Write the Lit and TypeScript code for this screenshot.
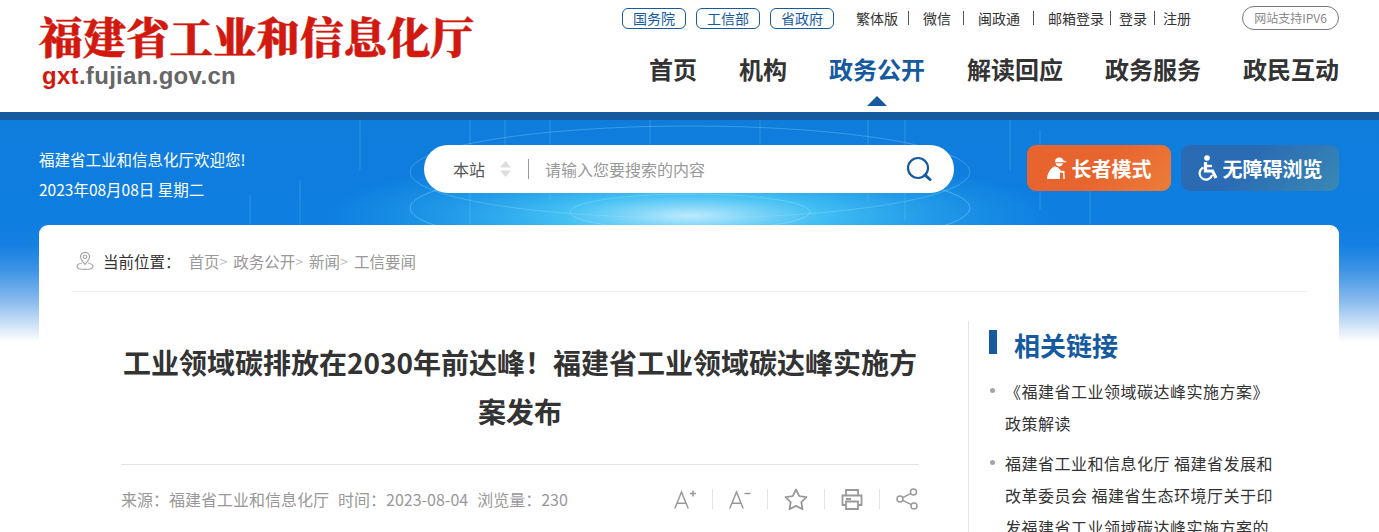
import { LitElement, html, css, svg } from "lit";
import { customElement } from "lit/decorators.js";

const FONT = `"Microsoft YaHei","Noto Sans CJK SC","Liberation Sans",sans-serif`;

const deco = svg`
<svg class="deco" width="1379" height="240" viewBox="0 120 1379 240" aria-hidden="true">
  <defs>
    <radialGradient id="glow" cx="50%" cy="50%" r="50%">
      <stop offset="0" stop-color="#c9f1ff" stop-opacity=".95"/>
      <stop offset=".35" stop-color="#4fd0f8" stop-opacity=".8"/>
      <stop offset="1" stop-color="#2ab0f0" stop-opacity="0"/>
    </radialGradient>
  </defs>
  <ellipse cx="690" cy="216" rx="370" ry="62" fill="url(#glow)"/>
  <g fill="none" stroke="#9fe2ff" stroke-opacity=".4">
    <ellipse cx="690" cy="208" rx="280" ry="42"/>
    <ellipse cx="690" cy="172" rx="280" ry="46" stroke-opacity=".3"/>
    <ellipse cx="690" cy="212" rx="120" ry="18"/>
    <path d="M470 120v105M505 120v60M550 120v80M650 120v28M760 120v30M868 120v82M905 120v100M360 120v50M1010 120v50M1090 190v35M300 180v45M250 195v30M1040 130v80" stroke-opacity=".22"/>
  </g>
</svg>`;

@customElement("app-root")
export class AppRoot extends LitElement {
  static styles = css`
    :host { display: block; width: 1379px; height: 532px; overflow: hidden; background: #fff; font-family: ${css([FONT] as any) && css`"Noto Sans CJK SC","Liberation Sans",sans-serif`}; color: #333; }
    * { box-sizing: border-box; }
    a { color: inherit; text-decoration: none; }

    .head { height: 112px; padding: 0 40px 0 39px; display: flex; justify-content: space-between; }
    .logo { padding-top: 7px; }
    .logo-t { font-size: 43.5px; line-height: 56px; font-weight: 900; color: #d2190f; white-space: nowrap; font-family: "Noto Serif CJK SC","Noto Sans CJK SC",serif; -webkit-text-stroke: .5px #d2190f; }
    .logo-u { margin: 0 0 0 3px; font: 700 24px/26px "Liberation Sans",sans-serif; color: #666; letter-spacing: .3px; }
    .logo-u b { color: #d2190f; }
    .right { display: flex; flex-direction: column; align-items: flex-end; width: 717px; }
    .top { display: flex; align-items: center; height: 24px; margin-top: 6px; width: 100%; }
    .pill { width: 64px; height: 21px; border: 1px solid #155a9f; border-radius: 6px; font-size: 14px; line-height: 19px; text-align: center; color: #155a9f; margin-right: 10px; white-space: nowrap; }
    .links { display: flex; align-items: center; margin-left: 22px; font-size: 14px; color: #333; white-space: nowrap; }
    .links a { line-height: 14px; }
    .links a + a { border-left: 1px solid #555; }
    .ipv6 { margin-left: auto; width: 97px; height: 24px; border: 1px solid #777; border-radius: 12px; font-size: 12px; line-height: 22px; text-align: center; color: #888; white-space: nowrap; }
    .nav { display: flex; gap: 42px; margin-top: 15px; font-size: 24px; line-height: 48px; font-weight: 700; color: #333; white-space: nowrap; }
    .nav .on { color: #155a9f; position: relative; height: 60px; }
    .nav .on::after { content: ""; position: absolute; left: 50%; margin-left: -10px; bottom: -1px; border: 10px solid transparent; border-top: 0; border-bottom-color: #155a9f; }

    .hero { position: relative; border-top: 8px solid #155a9f; height: 420px; background: linear-gradient(#0f7ddb 0, #0e7ee0 100px, #1580e2 125px, #3c93e4 150px, #86b9ee 180px, #cfe2f7 205px, #fff 222px); }
    .deco { position: absolute; left: 0; top: 0; }
    .bar { position: relative; height: 105px; padding: 25px 40px 0 39px; display: flex; }
    .hello { width: 385px; color: #fff; font-size: 15.5px; line-height: 30px; margin-top: -1px; white-space: nowrap; }
    .search { width: 530px; height: 48px; border-radius: 24px; background: #fff; display: flex; align-items: center; padding: 0 22px 0 29px; font-size: 16px; }
    .scope { color: #555; width: 47px; white-space: nowrap; }
    .updown { width: 11px; margin-right: 17px; display: block; }
    .ph { flex: 1; border-left: 1px solid #999; height: 20px; line-height: 20px; padding-left: 16px; color: #999; white-space: nowrap; }
    .btn { height: 46px; border-radius: 9px; color: #fff; font-size: 20px; font-weight: 700; display: flex; align-items: center; justify-content: center; gap: 5px; white-space: nowrap; }
    .old { width: 144px; margin-left: 73px; background: linear-gradient(135deg,#e8642f 50%,#ec7d3a); }
    .free { width: 158px; margin-left: 10px; background: linear-gradient(135deg,#2a6bb3 40%,#3a88b5); gap: 3px; }

    .card { position: relative; margin: 0 40px 0 39px; height: 400px; background: #fff; border-radius: 9px 9px 0 0; padding: 0 32px; }
    .crumb { height: 67px; border-bottom: 1px solid #f0f0f0; display: flex; align-items: center; padding: 5px 0 0 5px; font-size: 15.5px; color: #999; white-space: nowrap; }
    .crumb svg { margin-right: 9px; }
    .crumb .lead { color: #333; margin-right: 8px; }
    .crumb i { font-style: normal; color: #bbb; margin-right: 6px; font-size: 14px; }
    .cols { display: flex; margin-top: 29px; }
    .main { width: 897px; padding: 0 49px 0 50px; }
    .title { margin: 17px 0 0; padding-bottom: 28px; border-bottom: 1px solid #e3e3e3; font-size: 28px; line-height: 49px; font-weight: 700; text-align: center; color: #333; }
    .meta { display: flex; align-items: center; justify-content: space-between; height: 68px; font-size: 16px; color: #999; white-space: nowrap; }
    .meta span + span { margin-left: 9px; }
    .tools { display: flex; align-items: center; margin-right: 1px; }
    .tools svg { display: block; }
    .sep { width: 1px; height: 20px; background: #e3e3e3; margin: 0 16px; }
    .side { width: 310px; border-left: 1px solid #e3e3e3; padding: 9px 0 0 20px; }
    .side h2 { margin: 0; height: 24px; border-left: 8px solid #155a9f; padding-left: 17px; font-size: 26px; line-height: 30px; font-weight: 700; color: #155a9f; white-space: nowrap; }
    .side ul { list-style: none; margin: 21px 0 0; padding: 0; width: 287px; font-size: 16px; line-height: 32px; letter-spacing: .5px; color: #333; }
    .side li { position: relative; padding-left: 16px; margin-bottom: 8px; }
    .side li::before { content: ""; position: absolute; left: 1px; top: 13px; width: 5px; height: 5px; border-radius: 50%; background: #a5a5a5; }
  `;

  render() {
    return html`
      <header class="head">
        <div class="logo">
          <div class="logo-t">福建省工业和信息化厅</div>
          <div class="logo-u"><b>gxt</b>.fujian.gov.cn</div>
        </div>
        <div class="right">
          <div class="top">
            <a class="pill">国务院</a><a class="pill">工信部</a><a class="pill" style="margin-right:0">省政府</a>
            <div class="links">
              <a style="padding-right:10px">繁体版</a><a style="padding:0 12px 0 14px">微信</a><a style="padding:0 13px 0 14px">闽政通</a><a style="padding:0 6px 0 14px">邮箱登录</a><a style="padding:0 7px 0 8px">登录</a><a style="padding-left:8px">注册</a>
            </div>
            <a class="ipv6">网站支持IPV6</a>
          </div>
          <nav class="nav">
            <a>首页</a><a>机构</a><a class="on">政务公开</a><a>解读回应</a><a>政务服务</a><a>政民互动</a>
          </nav>
        </div>
      </header>
      <section class="hero">
        ${deco}
        <div class="bar">
          <div class="hello">福建省工业和信息化厅欢迎您!<br />2023年08月08日 星期二</div>
          <div class="search">
            <span class="scope">本站</span>
            <svg class="updown" width="11" height="16" viewBox="0 0 11 16"><path d="M5.5 0 11 6.5H0zM5.5 16 0 9.5h11z" fill="#ddd"/></svg>
            <span class="ph">请输入您要搜索的内容</span>
            <svg width="26" height="26" viewBox="0 0 26 26" fill="none" stroke="#155a9f"><circle cx="12" cy="12" r="10" stroke-width="2.2"/><path d="m19 19 5 4.5" stroke-width="3" stroke-linecap="round"/></svg>
          </div>
          <a class="btn old">
            <svg width="20" height="22" viewBox="0 0 20 22" fill="#fff"><path d="M8 4.2C8.3 1.6 10.200 .4 12.400 .5c2 .1 3.600 1.200 4.100 3.100l3 .9-.4.7H8z"/><path d="M8.600 6.200h7.400c-.4 2-1.900 3.200-3.700 3.200S9 8.100 8.600 6.200z"/><path d="M7.500 9.300 11 10.600l3 3.100 3.400.4.400 7.900h-1.400l-.4-6.200-3-.4v6.600H0C.3 16.600 3 11.500 7.500 9.300z"/></svg>
            长者模式</a>
          <a class="btn free">
            <svg width="22" height="26" viewBox="0 0 22 26" fill="none" stroke="#fff"><circle cx="9" cy="3" r="2.800" fill="#fff" stroke="none"/><path d="M7.500 7v9h7l3.500 7" stroke-width="3.200"/><path d="M8 11h6" stroke-width="2.400"/><path d="M5.500 12.500A6.300 6.300 0 1 0 14 20" stroke-width="2.200"/></svg>
            无障碍浏览</a>
        </div>
        <div class="card">
          <div class="crumb">
            <svg width="18" height="19" viewBox="0 0 18 19" fill="none" stroke="#a8a8a8" stroke-width="1.200"><path d="M9 13.500C6.500 10.500 4.500 8.500 4.500 5.800a4.500 4.500 0 0 1 9 0c0 2.700-2 4.700-4.500 7.700z"/><circle cx="9" cy="5.800" r="1.800"/><path d="M5.800 12C3 12.600 1 13.800 1 15.400 1 17.300 4.500 18.300 9 18.300s8-1 8-2.900c0-1.600-2-2.800-4.800-3.400"/></svg>
            <span class="lead">当前位置：</span><a>首页</a><i>&gt;</i><a>政务公开</a><i>&gt;</i><a>新闻</a><i>&gt;</i><a>工信要闻</a>
          </div>
          <div class="cols">
            <article class="main">
              <h1 class="title">工业领域碳排放在2030年前达峰！福建省工业领域碳达峰实施方案发布</h1>
              <div class="meta">
                <div><span>来源：福建省工业和信息化厅</span><span>时间：2023-08-04</span><span>浏览量：230</span></div>
                <div class="tools">
                  <svg width="22" height="20" viewBox="0 0 22 20" fill="none" stroke="#999" stroke-width="1.500"><path d="M.8 19.500 7.500 3l6.700 16.500M3 14.200h9"/><path d="M16 4.500h6M19 1.500v6"/></svg>
                  <span class="sep"></span>
                  <svg width="22" height="20" viewBox="0 0 22 20" fill="none" stroke="#999" stroke-width="1.500"><path d="M.8 19.500 7.500 3l6.700 16.500M3 14.200h9"/><path d="M15.500 4.500h6"/></svg>
                  <span class="sep"></span>
                  <svg width="24" height="22" viewBox="0 0 24 22" fill="none" stroke="#999" stroke-width="1.800" stroke-linejoin="round"><path d="m12 1.500 3.300 6.700 7.200 1-5.200 5 1.200 7-6.500-3.300-6.500 3.300 1.200-7-5.200-5 7.200-1z"/></svg>
                  <span class="sep"></span>
                  <svg width="22" height="22" viewBox="0 0 22 22" fill="none" stroke="#999" stroke-width="1.800"><path d="M5 7V2h12v5M5 17H1.500V7.500h19V17H17"/><path d="M5 13.500h12V21H5zM5 11h5"/></svg>
                  <span class="sep"></span>
                  <svg width="22" height="22" viewBox="0 0 22 22" fill="none" stroke="#999" stroke-width="1.500"><circle cx="4" cy="11" r="3"/><circle cx="17.500" cy="4" r="3"/><circle cx="18" cy="18" r="3"/><path d="m6.700 9.600 8.200-4.300M6.700 12.400l8.600 4.300"/></svg>
                </div>
              </div>
            </article>
            <aside class="side">
              <h2>相关链接</h2>
              <ul>
                <li>《福建省工业领域碳达峰实施方案》政策解读</li>
                <li>福建省工业和信息化厅 福建省发展和改革委员会 福建省生态环境厅关于印发福建省工业领域碳达峰实施方案的通知</li>
              </ul>
            </aside>
          </div>
        </div>
      </section>
    `;
  }
}
